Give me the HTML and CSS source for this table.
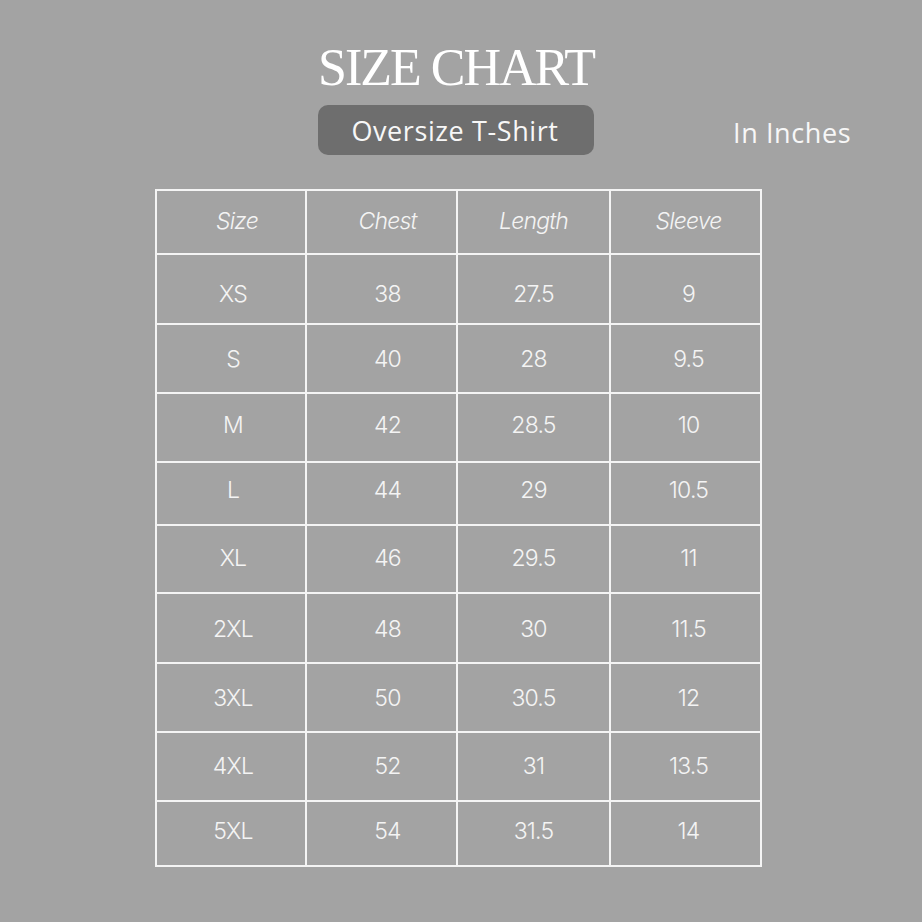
FILE: index.html
```html
<!DOCTYPE html>
<html>
<head>
<meta charset="utf-8">
<link rel="stylesheet" href="styles.css">
</head>
<body>
<main class="page">
  <h1 class="title">SIZE CHART</h1>
  <div class="subrow">
    <div class="badge">Oversize T-Shirt</div>
    <div class="unit">In Inches</div>
  </div>
  <div class="chart">
    <div class="cell head c1">Size</div><div class="cell head c2">Chest</div><div class="cell head c3">Length</div><div class="cell head c4">Sleeve</div>
    <div class="cell c1 r1">XS</div><div class="cell c2 r1">38</div><div class="cell c3 r1">27.5</div><div class="cell c4 r1">9</div>
    <div class="cell c1 r2">S</div><div class="cell c2 r2">40</div><div class="cell c3 r2">28</div><div class="cell c4 r2">9.5</div>
    <div class="cell c1 r3">M</div><div class="cell c2 r3">42</div><div class="cell c3 r3">28.5</div><div class="cell c4 r3">10</div>
    <div class="cell c1 r4">L</div><div class="cell c2 r4">44</div><div class="cell c3 r4">29</div><div class="cell c4 r4">10.5</div>
    <div class="cell c1 r5">XL</div><div class="cell c2 r5">46</div><div class="cell c3 r5">29.5</div><div class="cell c4 r5">11</div>
    <div class="cell c1 r6">2XL</div><div class="cell c2 r6">48</div><div class="cell c3 r6">30</div><div class="cell c4 r6">11.5</div>
    <div class="cell c1 r7">3XL</div><div class="cell c2 r7">50</div><div class="cell c3 r7">30.5</div><div class="cell c4 r7">12</div>
    <div class="cell c1 r8">4XL</div><div class="cell c2 r8">52</div><div class="cell c3 r8">31</div><div class="cell c4 r8">13.5</div>
    <div class="cell c1 r9">5XL</div><div class="cell c2 r9">54</div><div class="cell c3 r9">31.5</div><div class="cell c4 r9">14</div>
  </div>
</main>
</body>
</html>
```
FILE: styles.css
```css
html, body {
  margin: 0;
  padding: 0;
  background: #a3a3a3;
}
.page {
  width: 922px;
  height: 922px;
  box-sizing: border-box;
  padding-top: 38px;
  display: flex;
  flex-direction: column;
}
.title {
  margin: 0;
  width: 912px;
  text-align: center;
  font-family: "Liberation Serif", serif;
  font-weight: 400;
  font-size: 52px;
  line-height: 60px;
  letter-spacing: -2px;
  color: #ffffff;
}
.subrow {
  margin-top: 7px;
  width: 912px;
  display: grid;
  grid-template-columns: 1fr auto 1fr;
  align-items: center;
}
.badge {
  grid-column: 2;
  width: 276px;
  height: 50px;
  box-sizing: border-box;
  background: #6e6e6e;
  border-radius: 10px;
  display: flex;
  align-items: center;
  justify-content: center;
  font-family: "Open Sans", sans-serif;
  font-size: 27px;
  color: #f7f7f7;
  letter-spacing: 0.6px;
  padding-right: 2px;
}
.unit {
  grid-column: 3;
  padding-left: 139px;
  font-family: "Open Sans", sans-serif;
  font-weight: 400;
  font-size: 27px;
  letter-spacing: 0.6px;
  color: #f7f7f7;
  white-space: nowrap;
  padding-top: 4px;
}
.chart {
  margin-top: 34px;
  margin-left: 155px;
  width: 607px;
  box-sizing: border-box;
  display: grid;
  grid-template-columns: 148px 149px 151px 149px;
  grid-template-rows: 62px 68px 67px 67px 61px 66px 68px 67px 67px 63px;
  gap: 2px;
  padding: 2px;
  background: #f4f4f4;
  font-family: Inter, "Liberation Sans", sans-serif;
  color: #f4f4f4;
}
.cell {
  background: #a3a3a3;
  display: flex;
  align-items: center;
  justify-content: center;
  font-size: 23px;
  font-weight: 300;
  letter-spacing: -0.8px;
}
.head {
  font-style: italic;
  padding-bottom: 2px;
}
.c1 { padding-left: 4px; }
.c2 { padding-left: 12px; }
.c4 { padding-left: 6px; }
.head.c1 { padding-left: 12px; }
.r1 { padding-top: 10px; }
.r2 { padding-top: 0; }
.r3 { padding-bottom: 6px; }
.r4 { padding-bottom: 8px; }
.r5 { padding-bottom: 2px; }
.r6 { padding-top: 2px; }
.r7 { padding-top: 0; }
.r8 { padding-bottom: 2px; }
.r9 { padding-bottom: 6px; }
```
